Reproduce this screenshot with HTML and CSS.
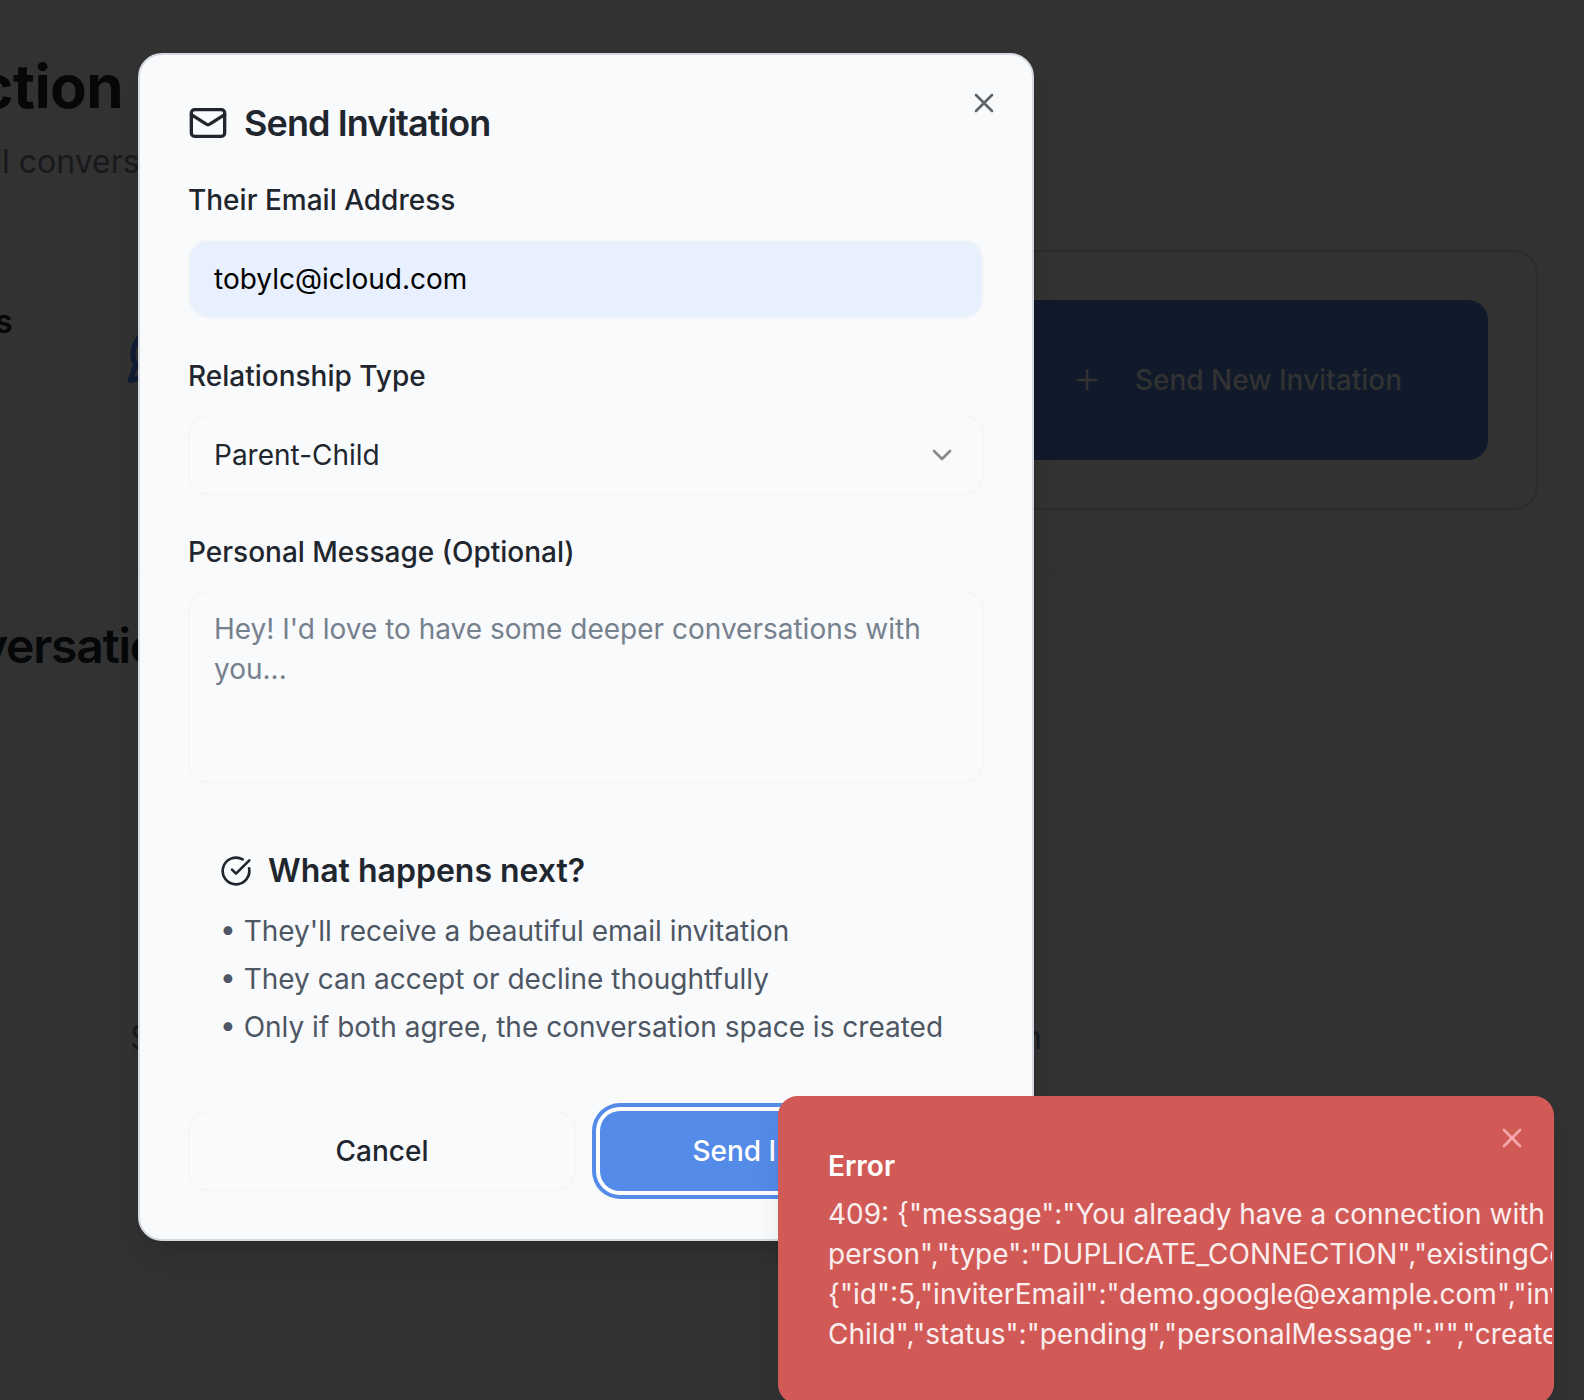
FILE: index.html
```html
<!DOCTYPE html>
<html lang="en">
<head>
<meta charset="utf-8">
<title>Send Invitation</title>
<link rel="stylesheet" href="styles.css">
</head>
<body>
<main class="page">
  <header class="hero">
    <h1 class="hero-title">ction</h1>
    <p class="hero-sub">l convers</p>
  </header>
  <section class="row">
    <div class="stats">
      <span class="stats-label">s</span>
      <svg class="stats-icon" viewBox="0 0 24 24"><path d="M7.9 20A9 9 0 1 0 4 16.1L2 22Z"/></svg>
    </div>
    <div class="invite-card">
      <button class="invite-btn">
        <svg class="icon" viewBox="0 0 24 24"><path d="M5 12h14M12 5v14"/></svg>
        <span>Send New Invitation</span>
      </button>
    </div>
  </section>
  <section class="panel">
    <h2 class="panel-title">versatio</h2>
    <p class="panel-hint"><span>S</span><span>n</span></p>
  </section>
</main>

<div class="dialog" role="dialog">
  <button class="close dialog-close" aria-label="Close"><svg class="icon" viewBox="0 0 24 24"><path d="M18 6 6 18M6 6l12 12"/></svg></button>
  <h2 class="dialog-title">
    <svg class="icon-lg" viewBox="0 0 24 24"><rect width="20" height="16" x="2" y="4" rx="2"/><path d="m22 7-8.97 5.7a1.94 1.94 0 0 1-2.06 0L2 7"/></svg>
    <span>Send Invitation</span>
  </h2>
  <div class="form">
    <div class="field">
      <div class="label">Their Email Address</div>
      <div class="control autofill">tobylc@icloud.com</div>
    </div>
    <div class="field">
      <div class="label">Relationship Type</div>
      <div class="control"><span>Parent-Child</span><svg class="icon chevron" viewBox="0 0 24 24"><path d="m6 9 6 6 6-6"/></svg></div>
    </div>
    <div class="field">
      <div class="label">Personal Message (Optional)</div>
      <div class="control area">Hey! I'd love to have some deeper conversations with you...</div>
    </div>
    <div class="next">
      <h3 class="next-title"><svg class="icon" viewBox="0 0 24 24"><path d="M21.801 10A10 10 0 1 1 17 3.335"/><path d="m9 11 3 3L22 4"/></svg><span>What happens next?</span></h3>
      <ul class="next-list">
        <li>• They'll receive a beautiful email invitation</li>
        <li>• They can accept or decline thoughtfully</li>
        <li>• Only if both agree, the conversation space is created</li>
      </ul>
    </div>
    <div class="actions">
      <button class="btn cancel">Cancel</button>
      <button class="btn send">Send Invitation</button>
    </div>
  </div>
</div>

<div class="toast" role="alert">
  <button class="close toast-close" aria-label="Dismiss"><svg class="icon" viewBox="0 0 24 24"><path d="M18 6 6 18M6 6l12 12"/></svg></button>
  <div class="toast-title">Error</div>
  <div class="toast-text">
    <div>409: {"message":"You already have a connection with</div>
    <div>person","type":"DUPLICATE_CONNECTION","existingCo</div>
    <div>{"id":5,"inviterEmail":"demo.google@example.com","inv</div>
    <div>Child","status":"pending","personalMessage":"","create</div>
  </div>
</div>
</body>
</html>
```
FILE: styles.css
```css
* { box-sizing: border-box; margin: 0; padding: 0; }
body {
  position: relative;
  width: 1584px;
  height: 1400px;
  overflow: hidden;
  background: #323232;
  color: #1f262e;
  font: 400 28px/40px Inter, sans-serif;
}
button { font: inherit; letter-spacing: inherit; color: inherit; background: none; border: 0; }
svg { fill: none; stroke: currentColor; stroke-width: 2; stroke-linecap: round; stroke-linejoin: round; flex: none; display: block; }
.icon { width: 32px; height: 32px; }
.icon-lg { width: 40px; height: 40px; }

/* dimmed page behind the dialog */
.page { height: 1400px; display: flex; flex-direction: column; }
.hero { height: 250px; padding-top: 50px; }
.hero-title { width: 123px; display: flex; justify-content: flex-end; font-size: 60px; line-height: 72px; font-weight: 700; letter-spacing: -0.6px; color: #060709; }
.hero-sub { padding: 16px 0 0 2px; font-size: 32px; line-height: 48px; color: #17191d; white-space: nowrap; }
.row { display: flex; justify-content: space-between; height: 260px; padding-right: 46px; }
.stats { display: flex; width: 600px; padding-top: 48px; }
.stats-label { width: 124px; margin-left: -5px; font-size: 32px; line-height: 48px; font-weight: 600; color: #060709; }
.stats-icon { width: 64px; height: 64px; margin: 24px 0 0 6px; color: #101b35; }
.invite-card { width: 604px; padding: 48px; border: 2px solid #2b2c2c; border-radius: 24px; }
.invite-btn { display: flex; align-items: center; justify-content: flex-end; gap: 32px; width: 504px; height: 160px; padding-right: 86px; border-radius: 20px; background: #101a2b; color: #323232; font-weight: 500; }
.panel { height: 744px; margin: 64px 46px 0 -40px; padding: 48px; border: 2px solid #313131; border-radius: 24px; }
.panel-title { margin: -2px 0 0 -30px; font-size: 48px; line-height: 48px; font-weight: 600; letter-spacing: -1.2px; color: #060709; }
.panel-hint { display: flex; justify-content: space-between; width: 912px; margin: 344px 0 0 120px; font-size: 32px; line-height: 48px; color: #17191d; }

.dialog {
  position: absolute; left: 138px; top: 53px; width: 896px; height: 1188px;
  padding: 48px; border: 2px solid #d5dae0; border-radius: 24px; background: #f9fafc;
  box-shadow: 0 20px 30px -6px rgba(0,0,0,.1), 0 8px 12px -8px rgba(0,0,0,.1);
}
.close { position: absolute; }
.dialog-close { top: 32px; right: 32px; opacity: .7; }
.dialog-title { display: flex; align-items: center; gap: 16px; height: 40px; margin-bottom: 32px; font-size: 36px; line-height: 36px; font-weight: 600; letter-spacing: -0.9px; }
.form { display: flex; flex-direction: column; gap: 32px; }
.field { display: flex; flex-direction: column; gap: 16px; }
.label { height: 48px; line-height: 50px; font-weight: 500; }
.control { display: flex; align-items: center; justify-content: space-between; height: 80px; padding: 0 24px; border: 2px solid #f5f6f8; border-radius: 20px; }
.autofill { background: #e8effd; background-clip: padding-box; color: #000; }
.chevron { color: #1b1b1b; opacity: .5; }
.area { display: block; height: 192px; padding: 16px 24px; color: #76818e; }
.next { padding: 32px; }
.next-title { display: flex; align-items: center; gap: 16px; font-size: 32px; line-height: 48px; font-weight: 600; margin-bottom: 16px; }
.next-list { display: flex; flex-direction: column; gap: 8px; list-style: none; color: #4d5663; white-space: nowrap; }
.actions { display: flex; gap: 24px; }
.btn { height: 80px; border-radius: 20px; font-weight: 500; }
.cancel { width: 388px; border: 2px solid #f5f6f8; }
.send { width: 384px; background: #548ae8; color: #fff; box-shadow: 0 0 0 4px #fff, 0 0 0 8px #548ae8; }

.toast {
  position: absolute; left: 778px; top: 1096px; width: 776px; height: 308px;
  padding: 48px; border: 2px solid #d15a57; border-radius: 20px; background: #d15a57; color: #fff;
  overflow: hidden; white-space: nowrap;
  box-shadow: 0 20px 30px -6px rgba(0,0,0,.1), 0 8px 12px -8px rgba(0,0,0,.1);
}
.toast-close { top: 24px; right: 24px; color: #f3a9a9; }
.toast-title { font-weight: 600; margin-bottom: 8px; }
.toast-text { color: #fbeeee; }
```
